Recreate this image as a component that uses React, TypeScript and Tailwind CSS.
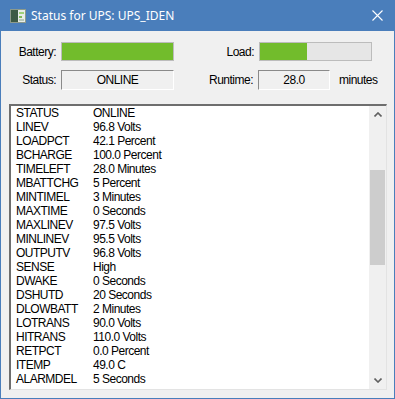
const rows: [string, string][] = [
  ["STATUS", "ONLINE"],
  ["LINEV", "96.8 Volts"],
  ["LOADPCT", "42.1 Percent"],
  ["BCHARGE", "100.0 Percent"],
  ["TIMELEFT", "28.0 Minutes"],
  ["MBATTCHG", "5 Percent"],
  ["MINTIMEL", "3 Minutes"],
  ["MAXTIME", "0 Seconds"],
  ["MAXLINEV", "97.5 Volts"],
  ["MINLINEV", "95.5 Volts"],
  ["OUTPUTV", "96.8 Volts"],
  ["SENSE", "High"],
  ["DWAKE", "0 Seconds"],
  ["DSHUTD", "20 Seconds"],
  ["DLOWBATT", "2 Minutes"],
  ["LOTRANS", "90.0 Volts"],
  ["HITRANS", "110.0 Volts"],
  ["RETPCT", "0.0 Percent"],
  ["ITEMP", "49.0 C"],
  ["ALARMDEL", "5 Seconds"],
];

function Bar({ pct }: { pct: number }) {
  return (
    <div className="h-[19px] w-[113px] border border-[#bcbcbc] bg-[#e6e6e6]">
      <div className="h-full bg-[#72bc2c]" style={{ width: `${pct}%` }} />
    </div>
  );
}

function Sunken({ children, w }: { children: React.ReactNode; w: string }) {
  return (
    <div
      className={`${w} flex h-[20px] items-center justify-center border-t border-l border-t-[#8a8a8a] border-l-[#8a8a8a] border-b border-r border-b-white border-r-white bg-[#f0f0f0]`}
    >
      {children}
    </div>
  );
}

export default function App() {
  return (
    <div
      className="flex h-[399px] w-[395px] flex-col bg-[#4a7ebb] px-px pb-px text-[12px] tracking-[-0.5px] text-black"
      style={{ fontFamily: '"Liberation Sans", Arial, sans-serif' }}
    >
      {/* Title bar */}
      <div className="flex h-[31px] shrink-0 items-center text-white">
        <svg width="16" height="14" viewBox="0 0 16 14" className="ml-[9px]">
          <rect x="0.5" y="0.5" width="15" height="13" fill="#e8ece8" stroke="#8c9a8c" />
          <rect x="1" y="1" width="7" height="12" fill="#3d5a45" />
          <rect x="9" y="3" width="5" height="2" fill="#9fd07a" />
          <rect x="9" y="7" width="3" height="2" fill="#7fb85a" />
          <rect x="9" y="10" width="5" height="2" fill="#b8c8b8" />
        </svg>
        <span
          className="ml-[5px] text-[12px] tracking-normal"
          style={{ fontFamily: '"Noto Sans", "Open Sans", sans-serif' }}
        >
          Status for UPS: UPS_IDEN
        </span>
        <svg width="11" height="11" viewBox="0 0 11 11" className="ml-auto mr-[11px]">
          <path d="M0.5 0.5 L10.5 10.5 M10.5 0.5 L0.5 10.5" stroke="white" strokeWidth="1.1" />
        </svg>
      </div>

      {/* Body */}
      <div className="flex flex-1 flex-col bg-[#f0f0f0] pt-[11px]">
        <div className="flex items-center">
          <span className="w-[55px] text-right">Battery:</span>
          <div className="ml-[5px]">
            <Bar pct={100} />
          </div>
          <span className="w-[80px] text-right">Load:</span>
          <div className="ml-[5px]">
            <Bar pct={42.1} />
          </div>
        </div>

        <div className="mt-[9px] flex items-center">
          <span className="w-[55px] text-right">Status:</span>
          <div className="ml-[5px]">
            <Sunken w="w-[113px]">ONLINE</Sunken>
          </div>
          <span className="w-[79px] text-right">Runtime:</span>
          <div className="ml-[5px]">
            <Sunken w="w-[72px]">28.0</Sunken>
          </div>
          <span className="ml-[9px]">minutes</span>
        </div>

        {/* List */}
        <div className="ml-[8px] mt-[14px] flex h-[286px] w-[378px] border-t-2 border-l-2 border-t-[#6e6e6e] border-l-[#6e6e6e] border-b border-r border-b-[#e3e3e3] border-r-[#e3e3e3] bg-white">
          <div className="flex-1 overflow-hidden pl-[5px]">
            {rows.map(([k, v]) => (
              <div key={k} className="flex h-[14px] items-center leading-[14px]">
                <span className="w-[77px]">{k}</span>
                <span>{v}</span>
              </div>
            ))}
          </div>
          <div className="flex w-[17px] flex-col bg-[#f0f0f0]">
            <div className="flex h-[17px] items-center justify-center">
              <svg width="8" height="5" viewBox="0 0 8 5">
                <path d="M0.5 4.5 L4 1 L7.5 4.5" fill="none" stroke="#606060" strokeWidth="1.6" />
              </svg>
            </div>
            <div className="mt-[47px] mx-px h-[95px] bg-[#cdcdcd]" />
            <div className="mt-auto flex h-[17px] items-center justify-center">
              <svg width="8" height="5" viewBox="0 0 8 5">
                <path d="M0.5 0.5 L4 4 L7.5 0.5" fill="none" stroke="#606060" strokeWidth="1.6" />
              </svg>
            </div>
          </div>
        </div>
      </div>
    </div>
  );
}
